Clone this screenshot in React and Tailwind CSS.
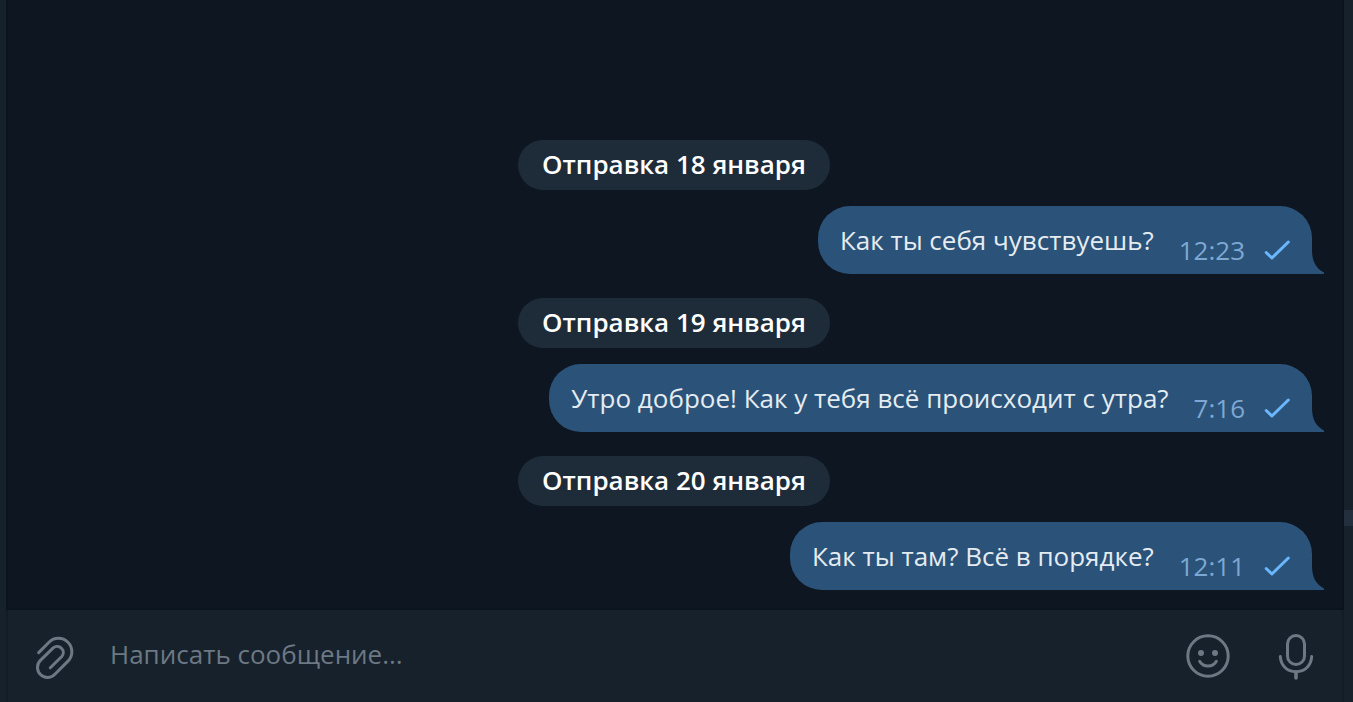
const days = [
  { date: 'Отправка 18 января', text: 'Как ты себя чувствуешь?', time: '12:23' },
  { date: 'Отправка 19 января', text: 'Утро доброе! Как у тебя всё происходит с утра?', time: '7:16' },
  { date: 'Отправка 20 января', text: 'Как ты там? Всё в порядке?', time: '12:11' },
];

function Check() {
  return (
    <svg className="h-5 w-7 shrink-0 text-[#6ab7ff]" viewBox="0 0 28 20" fill="none" stroke="currentColor" strokeWidth="3" strokeLinecap="round" strokeLinejoin="round" aria-hidden="true">
      <path d="M3.2 12.5 8.9 18 25.3 2" />
    </svg>
  );
}

function Bubble({ text, time }) {
  return (
    <div className="relative flex h-17 max-w-full items-center rounded-[32px] rounded-br-none bg-[#2b5278] pr-[21px] pl-[22px]">
      <p className="text-[26px] leading-9 text-[#e4ecf2]">{text}</p>
      <div className="ml-[25px] flex items-center gap-[18px] self-end pb-1.5">
        <time className="text-[26px] leading-9 text-[#7da8d3]">{time}</time>
        <Check />
      </div>
      <svg className="absolute bottom-0 left-full h-7 w-3 text-[#2b5278]" viewBox="0 0 12 28" fill="currentColor" aria-hidden="true">
        <path d="M0 4C0 15 4 22.5 12 26.5V28H0Z" />
      </svg>
    </div>
  );
}

function Clip() {
  return (
    <svg className="h-12 w-10" viewBox="0 -4 40 48" fill="none" stroke="currentColor" strokeWidth="3" strokeLinecap="round" strokeLinejoin="round" aria-hidden="true">
      <path d="M2.7 16.6 13 6.2A13.4 13.4 0 0 1 32 25.1L18.6 38.5A10 10 0 0 1 4.4 24.4L17.2 11.9A6.1 6.1 0 0 1 25.8 20.5L14.3 31.8" />
    </svg>
  );
}

function Smile() {
  return (
    <svg className="size-11" viewBox="0 0 44 44" fill="none" stroke="currentColor" strokeWidth="3" strokeLinecap="round" aria-hidden="true">
      <circle cx="22" cy="22" r="20.2" />
      <circle cx="15" cy="19" r="3" fill="currentColor" stroke="none" />
      <circle cx="29" cy="19" r="3" fill="currentColor" stroke="none" />
      <path d="M13.6 27.3C17.3 33.7 26.7 33.7 30.4 27.3" />
    </svg>
  );
}

function Mic() {
  return (
    <svg className="h-12 w-9" viewBox="0 0 36 48" fill="none" stroke="currentColor" strokeWidth="3" strokeLinecap="round" aria-hidden="true">
      <rect x="9.5" y="3.5" width="17" height="29" rx="8.5" />
      <path d="M2.3 24.5C2.8 33.5 9 39.7 18 39.7S33.2 33.5 33.7 24.5" />
      <path d="M18 40v6" strokeWidth="3.6" />
    </svg>
  );
}

export default function App() {
  return (
    <div className="flex min-h-screen bg-[#17212b] font-['Open_Sans','Noto_Sans',sans-serif]">
      <div className="w-1.5 shrink-0" />
      <div className="flex min-w-0 flex-1 flex-col">
        <main className="flex flex-1 flex-col justify-end gap-6 border-x-2 border-[#0b141d] bg-[#0e1621] pb-[18px]">
          {days.map((day) => (
            <section key={day.date} className="flex flex-col gap-4">
              <h2 className="-ml-0.5 flex h-[50px] items-center self-center rounded-full bg-[#1e2c3a] px-6 pb-0.5 text-[26px] leading-9 font-semibold text-white">
                {day.date}
              </h2>
              <div className="flex justify-end pr-[30px]">
                <Bubble text={day.text} time={day.time} />
              </div>
            </section>
          ))}
        </main>
        <div className="h-0.5 bg-[#0b141d]" />
        <form className="flex h-[92px] items-center border-x-2 border-[#121c26] px-7 text-[#6c7883]" onSubmit={(e) => e.preventDefault()}>
          <button type="button" aria-label="Прикрепить файл"><Clip /></button>
          <input
            type="text"
            aria-label="Сообщение"
            placeholder="Написать сообщение..."
            className="mx-[34px] min-w-0 flex-1 bg-transparent pb-1 text-[26px] leading-9 text-[#e4ecf2] outline-none placeholder:text-[#6c7883]"
          />
          <div className="flex items-center gap-12">
            <button type="button" aria-label="Эмодзи"><Smile /></button>
            <button type="button" aria-label="Голосовое сообщение"><Mic /></button>
          </div>
        </form>
      </div>
      <div className="flex w-[9px] shrink-0 flex-col">
        <div className="flex-[510]" />
        <div className="h-4 bg-[#242f3d]" />
        <div className="flex-[176]" />
      </div>
    </div>
  );
}
